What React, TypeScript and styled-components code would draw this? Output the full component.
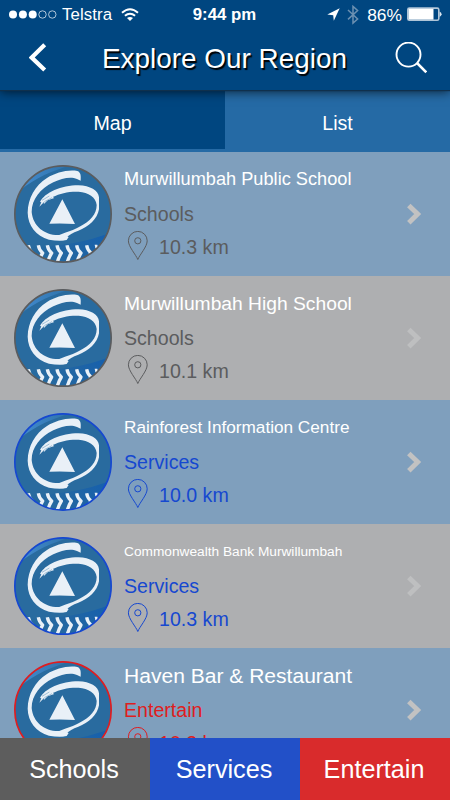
import React from "react";
import styled, { createGlobalStyle } from "styled-components";

const GlobalStyle = createGlobalStyle`
  * { box-sizing: border-box; }
  body { margin: 0; font-family: "Liberation Sans", Arial, sans-serif; }
  svg { display: block; flex: none; }
`;

const Screen = styled.div`
  width: 450px;
  height: 800px;
  display: flex;
  flex-direction: column;
  overflow: hidden;
  background: #256aa5;
  color: #fff;
`;

const Header = styled.header`
  position: relative;
  z-index: 1;
  flex: none;
  height: 90px;
  background: #004680;
  box-shadow: 0 1px 1px #10304c, 0 2px 10px rgba(0, 0, 0, 0.65);
`;

const StatusBar = styled.div`
  display: grid;
  grid-template-columns: 1fr auto 1fr;
  align-items: center;
  height: 30px;
  padding: 0 8px 0 9px;
  font-size: 16.8px;
  line-height: 30px;
`;

const StatusGroup = styled.div<{ $end?: boolean }>`
  display: flex;
  align-items: center;
  justify-content: ${(p) => (p.$end ? "flex-end" : "flex-start")};
`;

const Carrier = styled.span`
  margin: 0 9px 0 5px;
  letter-spacing: 0.1px;
`;

const Clock = styled.span`
  margin-right: 2px;
  font-weight: 700;
`;

const Percent = styled.span`
  margin: 0 5px 0 8px;
  font-size: 17.4px;
`;

const TitleBar = styled.div`
  display: flex;
  align-items: center;
  justify-content: space-between;
  height: 56px;
  padding: 0 23px 0 29px;
`;

const Title = styled.h1`
  margin: 0 0 0 7px;
  font-size: 27.9px;
  font-weight: 400;
  line-height: 57px;
  text-shadow: 1.5px 1.5px 1px #000;
`;

const IconButton = styled.button`
  padding: 0;
  border: 0;
  background: none;
  color: #fff;
`;

const Tabs = styled.nav`
  flex: none;
  display: flex;
  height: 62px;
`;

const Tab = styled.button<{ $active?: boolean }>`
  flex: 1;
  height: 59px;
  padding: 8px 0 0;
  border: 0;
  background: ${(p) => (p.$active ? "#004680" : "#256aa5")};
  color: #fff;
  font: 19.6px "Liberation Sans", Arial, sans-serif;
`;

const List = styled.main`
  flex: 1;
  min-height: 0;
  overflow: hidden;
`;

const Row = styled.article<{ $alt: boolean }>`
  display: flex;
  align-items: flex-start;
  height: 124px;
  padding: 13px 28px 0 14px;
  background: ${(p) => (p.$alt ? "#aeafb1" : "#7f9fbd")};
`;

const Details = styled.div<{ $color: string }>`
  flex: 1;
  margin-left: 12px;
  color: ${(p) => p.$color};
  font-size: 19.6px;
  white-space: nowrap;
`;

const Name = styled.h2<{ $size: number }>`
  margin: 0;
  height: 31px;
  color: #fff;
  font-size: ${(p) => p.$size}px;
  font-weight: 400;
  line-height: 29px;
`;

const Category = styled.div`
  height: 35px;
  line-height: 36px;
`;

const Distance = styled.div`
  display: flex;
  gap: 10px;
  height: 30px;
  padding-left: 3px;
  line-height: 33px;
`;

const ChevronBox = styled.div`
  align-self: center;
  padding-bottom: 13px;
`;

const Filters = styled.footer`
  flex: none;
  display: grid;
  grid-template-columns: repeat(3, 1fr);
  height: 62px;
`;

const Filter = styled.button<{ $bg: string }>`
  padding: 0 2px 0 0;
  border: 0;
  background: ${(p) => p.$bg};
  color: #fff;
  font: 25.2px "Liberation Sans", Arial, sans-serif;
`;

const SignalDots = () => (
  <svg width="48" height="10" viewBox="0 0 48 10" fill="#fff">
    <circle cx="4" cy="4.5" r="4" />
    <circle cx="13.9" cy="4.5" r="4" />
    <circle cx="23.7" cy="4.5" r="4" />
    <g fill="none" stroke="#dbe6ef" strokeWidth=".8">
      <circle cx="33.5" cy="4.5" r="3.7" />
      <circle cx="43.3" cy="4.5" r="3.7" />
    </g>
  </svg>
);

const Wifi = () => (
  <svg width="18" height="14" viewBox="0 0 18 14" fill="none" stroke="#fff" strokeWidth="2">
    <path d="M1 4.7Q9-2.3 17 4.7M3.9 7.8q5.1-4.2 10.2 0" />
    <path d="M6 10.1q3-2.3 6 0l-3 3z" fill="#fff" stroke="none" />
  </svg>
);

const Location = () => (
  <svg width="20" height="14" viewBox="0 0 20 14">
    <path d="M.3 6.6 12.7.3 6.8 12.8 6.2 7.2z" fill="#fff" />
  </svg>
);

const Bluetooth = () => (
  <svg width="12" height="20" viewBox="0 0 12 20" fill="none" stroke="#6b90b1" strokeWidth="1.5">
    <path d="m1 5 9.6 9L6 18V1.4l4.6 4.1L1 14.4" />
  </svg>
);

const Battery = () => (
  <svg width="35" height="16" viewBox="0 0 35 16">
    <rect x=".8" y="1.1" width="31" height="12.2" rx="1.6" fill="none" stroke="#b0c5d7" strokeWidth="1.6" />
    <rect x="1.5" y="1.8" width="25" height="10.8" fill="#fff" />
    <path d="M32.6 4.6q4 2.7 0 5.4z" fill="#dbe6ef" />
  </svg>
);

const Back = () => (
  <svg width="18" height="30" viewBox="0 0 18 30">
    <path d="M15.7 1.8 2.7 14.6l13 12.5" fill="none" stroke="currentColor" strokeWidth="4.2" />
  </svg>
);

const Search = () => (
  <svg width="32" height="32" viewBox="0 0 32 32" fill="none" stroke="currentColor" strokeWidth="1.9">
    <circle cx="13.5" cy="12.6" r="12" />
    <path d="m22 21 9.3 9.3" strokeWidth="2.5" />
  </svg>
);

const Pin = () => (
  <svg width="22" height="30" viewBox="0 0 22 30" fill="none" stroke="currentColor">
    <path d="M10.8 28.5C9 23.8 1.4 15.7 1.4 9.8a9.4 9.4 0 0 1 18.8 0c0 5.9-7.6 14-9.4 18.7z" />
    <circle cx="10.8" cy="9.8" r="3.1" />
  </svg>
);

const Chevron = ({ color }: { color: string }) => (
  <svg width="16" height="22" viewBox="0 0 16 22">
    <path d="m2.8 2.4 8.9 8.7-8.9 8.7" fill="none" stroke={color} strokeWidth="4.9" />
  </svg>
);

const treadX = [55, 85, 112, 141, 171, 200, 230];

const Avatar = ({ ring, id }: { ring: string; id: string }) => (
  <svg width="98" height="98" viewBox="12 9 294 294">
    <defs>
      <clipPath id={id}>
        <circle cx="159" cy="156" r="145" />
      </clipPath>
      <linearGradient id={`${id}-foot`} x1="0" y1=".3" x2="1" y2="0">
        <stop offset="0" stopColor="#286b9f" />
        <stop offset=".45" stopColor="#2065a4" />
        <stop offset="1" stopColor="#135eb0" />
      </linearGradient>
      <linearGradient id={`${id}-sky`} x1="0" y1="0" x2="1" y2="0">
        <stop offset=".2" stopColor="#4189cc" />
        <stop offset="1" stopColor="#296b9f" />
      </linearGradient>
    </defs>
    <g clipPath={`url(#${id})`}>
      <path d="M0 0h320v320H0z" fill="#296b9f" />
      <path d="M0 100V0h215C140 22 85 40 32 84z" fill={`url(#${id}-sky)`} />
      <path d="M40 256C150 254 235 240 320 205v110H40z" fill={`url(#${id}-foot)`} />
      <g fill="#e9f0f7">
        <path d="M212 56C213 42 213 31 202 27C173 22 137 32 111 48C75 71 54 108 53 152C54 191 78 222 117 233C135 236 155 238 170 234L176 225L150 219C108 222 69 195 65 150C65 112 91 80 130 61C155 49 182 42 201 51Z" />
        <path d="M88 134L94 121L90 120C104 92 154 70 205 70C241 71 265 86 267 106L267 142C262 171 236 195 205 206C188 212 177 218 169 228L160 235L121 232C151 214 185 208 207 195C241 178 260 156 260 129C258 105 235 91 206 89C174 88 151 94 128 105L133 108L113 115L101 127L103 119Z" />
        <path d="M157 112 118 185q39-2 77 1z" />
      </g>
      <path d="m96 115 22-13M103 119l23-12" stroke="#7da6c6" strokeWidth="2" fill="none" />
      <g fill="none" stroke="#e9f0f7" strokeWidth="10" strokeLinejoin="round">
        {treadX.map((x) => (
          <path key={x} d={`M${x} 250q2 14 13 23q-7 11 -12 27`} />
        ))}
        <path d="M258 248q0 8 6 13" strokeWidth="8" />
      </g>
    </g>
    <circle cx="159" cy="156" r="144.5" fill="none" stroke={ring} strokeWidth="5" />
  </svg>
);

const GRAY = "#5b5c5e";
const BLUE = "#1648d0";
const RED = "#df1d20";

const places = [
  { name: "Murwillumbah Public School", size: 18.2, category: "Schools", distance: "10.3 km", color: GRAY },
  { name: "Murwillumbah High School", size: 19.25, category: "Schools", distance: "10.1 km", color: GRAY },
  { name: "Rainforest Information Centre", size: 17.2, category: "Services", distance: "10.0 km", color: BLUE },
  { name: "Commonwealth Bank Murwillumbah", size: 13.7, category: "Services", distance: "10.3 km", color: BLUE },
  { name: "Haven Bar & Restaurant", size: 21.05, category: "Entertain", distance: "10.3 km", color: RED },
];

export default function App() {
  return (
    <>
      <GlobalStyle />
      <Screen>
        <Header>
          <StatusBar>
            <StatusGroup>
              <SignalDots />
              <Carrier>Telstra</Carrier>
              <Wifi />
            </StatusGroup>
            <Clock>9:44 pm</Clock>
            <StatusGroup $end>
              <Location />
              <Bluetooth />
              <Percent>86%</Percent>
              <Battery />
            </StatusGroup>
          </StatusBar>
          <TitleBar>
            <IconButton aria-label="Back">
              <Back />
            </IconButton>
            <Title>Explore Our Region</Title>
            <IconButton aria-label="Search">
              <Search />
            </IconButton>
          </TitleBar>
        </Header>
        <Tabs>
          <Tab $active>Map</Tab>
          <Tab>List</Tab>
        </Tabs>
        <List>
          {places.map((place, i) => (
            <Row key={place.name} $alt={i % 2 === 1}>
              <Avatar ring={place.color} id={`avatar-${i}`} />
              <Details $color={place.color}>
                <Name $size={place.size}>{place.name}</Name>
                <Category>{place.category}</Category>
                <Distance>
                  <Pin />
                  {place.distance}
                </Distance>
              </Details>
              <ChevronBox>
                <Chevron color={i % 2 ? "#bebfc0" : "#c2c2c2"} />
              </ChevronBox>
            </Row>
          ))}
        </List>
        <Filters>
          <Filter $bg="#5d5d5d">Schools</Filter>
          <Filter $bg="#2250c8">Services</Filter>
          <Filter $bg="#d92b2c">Entertain</Filter>
        </Filters>
      </Screen>
    </>
  );
}
